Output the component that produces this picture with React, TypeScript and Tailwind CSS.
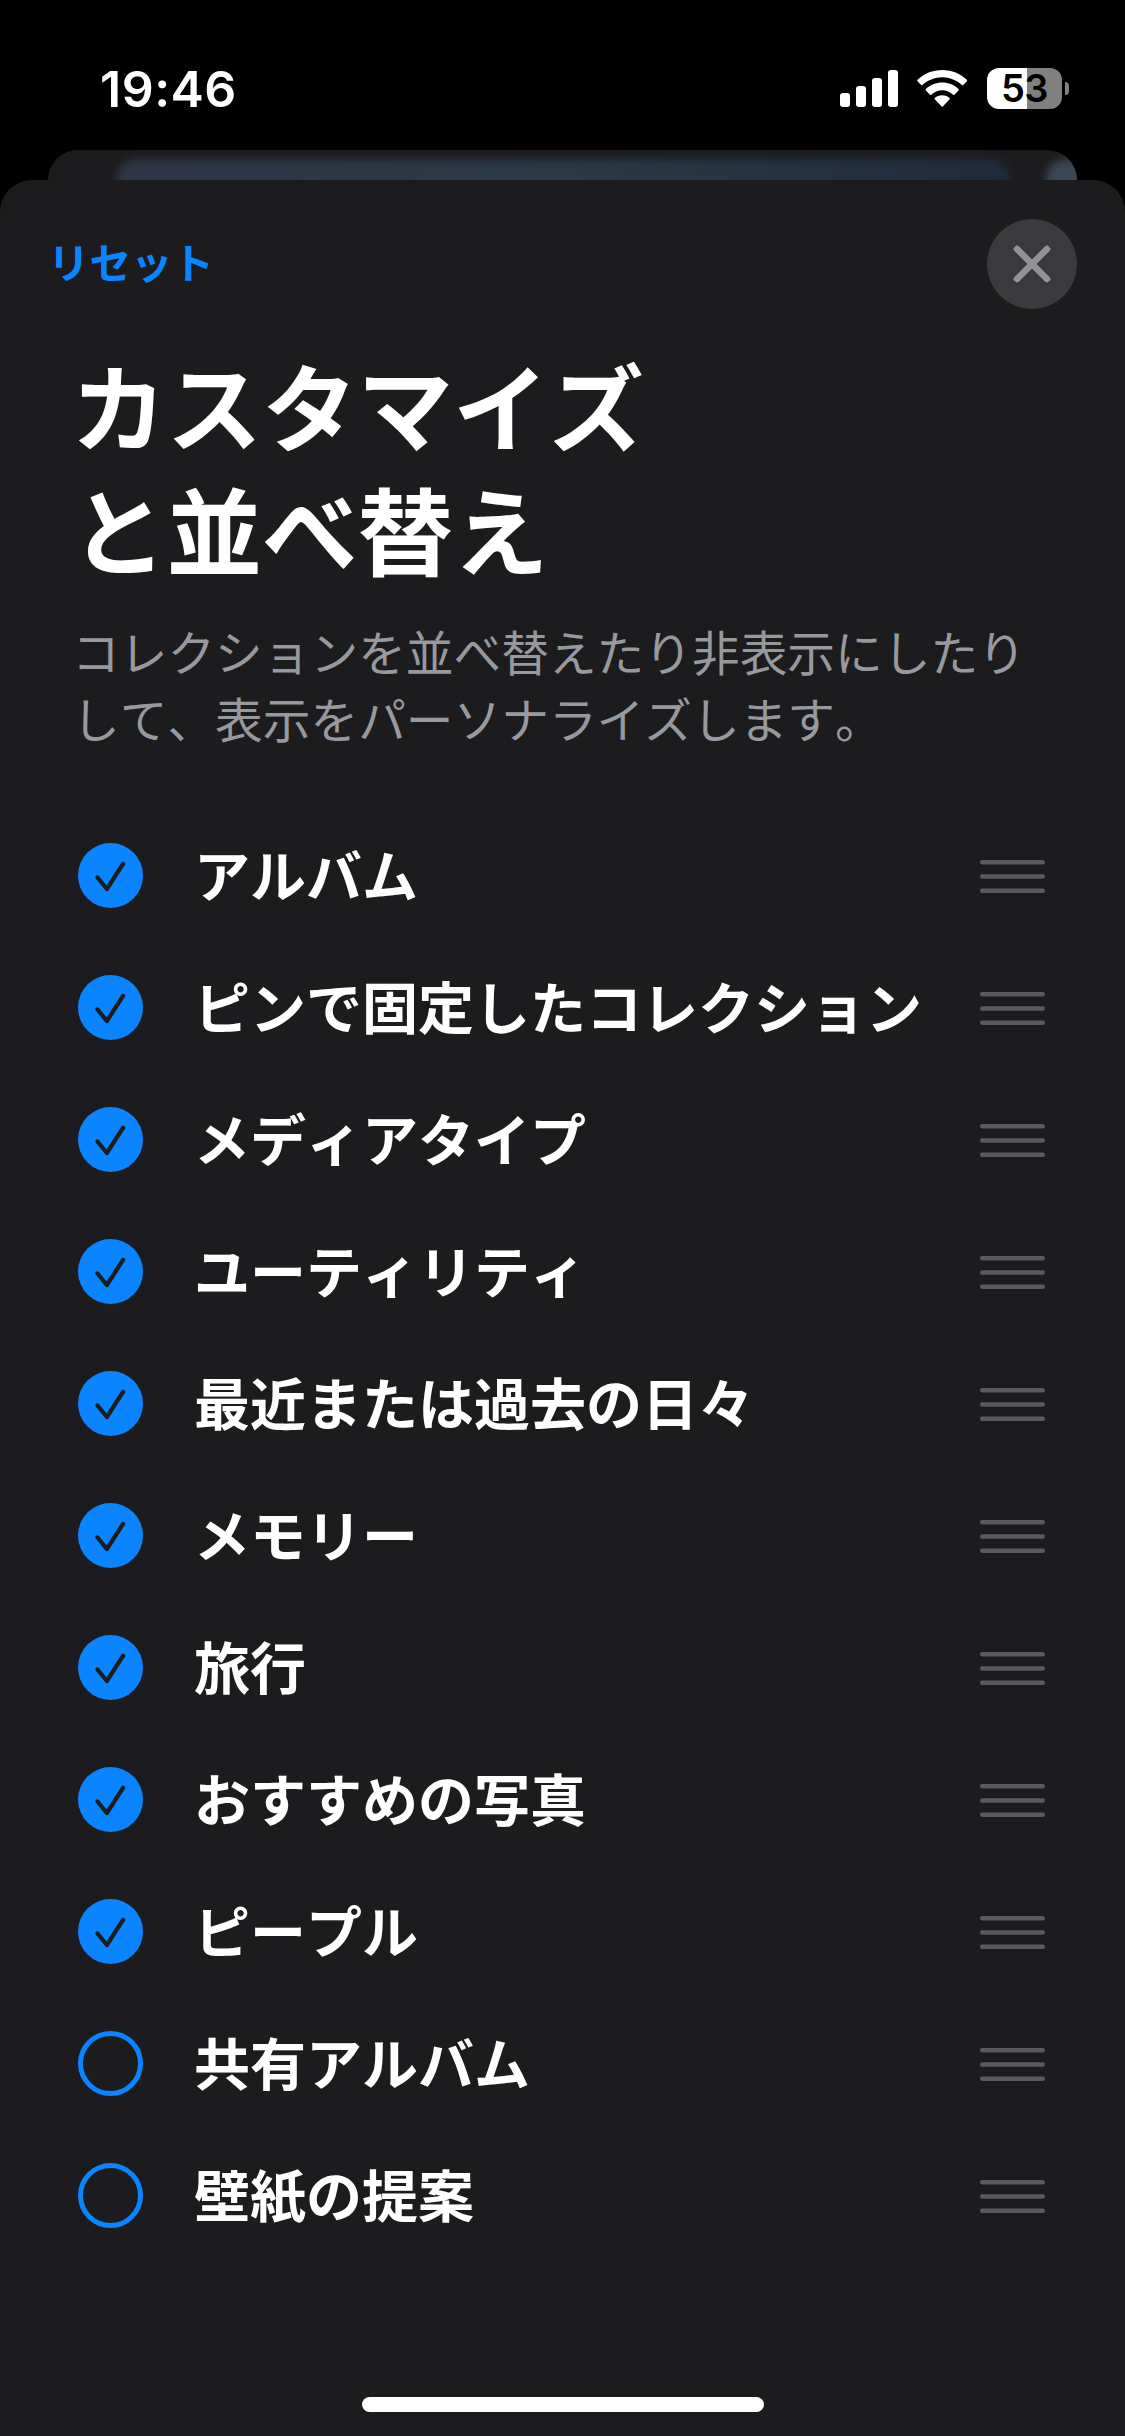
import { useState } from "react";

const initialCollections = [
  { name: "アルバム", visible: true },
  { name: "ピンで固定したコレクション", visible: true },
  { name: "メディアタイプ", visible: true },
  { name: "ユーティリティ", visible: true },
  { name: "最近または過去の日々", visible: true },
  { name: "メモリー", visible: true },
  { name: "旅行", visible: true },
  { name: "おすすめの写真", visible: true },
  { name: "ピープル", visible: true },
  { name: "共有アルバム", visible: false },
  { name: "壁紙の提案", visible: false },
];

function StatusBar() {
  return (
    <div className="flex h-[150px] items-start justify-between pl-[100px] pr-14 pt-[68px] font-['Inter',sans-serif]">
      <div className="text-[50px] font-semibold leading-[42px] tracking-[0.5px] text-white">
        19:46
      </div>
      <div className="flex h-[41px] items-center">
        <svg width="58" height="37" viewBox="0 0 58 37" fill="#fff">
          <rect x="0" y="23" width="10" height="14" rx="3" />
          <rect x="16" y="16" width="10" height="21" rx="3" />
          <rect x="32" y="8" width="10" height="29" rx="3" />
          <rect x="48" y="0" width="10" height="37" rx="3" />
        </svg>
        <svg className="ml-[19px]" width="51" height="37" viewBox="0 0 51 37" fill="#fff">
          <path d="M25.2 0C15.6 0 6.9 3.7 0.5 9.8C0.1 10.2 0.1 10.8 0.5 11.2L4.2 15C4.6 15.4 5.1 15.4 5.5 15C10.6 10.3 17.5 7.2 25.2 7.2C32.9 7.2 39.8 10.3 44.9 15C45.3 15.4 45.8 15.4 46.2 15L49.9 11.2C50.3 10.8 50.3 10.2 49.9 9.8C43.5 3.7 34.8 0 25.2 0Z" />
          <path d="M25.2 12.6C18.9 12.6 13.2 15 8.9 19C8.5 19.4 8.5 20 8.9 20.4L13 24.7C13.4 25.1 13.9 25.1 14.3 24.7C17.2 22 21 20.2 25.2 20.2C29.4 20.2 33.2 22 36.1 24.7C36.5 25.1 37 25.1 37.4 24.7L41.5 20.4C41.9 20 41.9 19.4 41.5 19C37.2 15 31.5 12.6 25.2 12.6Z" />
          <path d="M25.2 25.2C22.3 25.2 19.8 26.2 17.8 27.9C17.4 28.3 17.4 28.8 17.8 29.2L24.6 36.4C25 36.8 25.4 36.8 25.8 36.4L32.6 29.2C33 28.8 33 28.3 32.6 27.9C30.6 26.2 28.1 25.2 25.2 25.2Z" />
        </svg>
        <div className="ml-[19px] flex h-[41px] w-[75px] items-center justify-center rounded-[12px] bg-linear-to-r from-white from-[53.3%] to-[#808080] to-[53.3%]">
          <span className="text-[38px] font-semibold leading-[41px] tracking-[-0.5px] text-black">53</span>
        </div>
        <div className="ml-[3px] h-[13px] w-1 rounded-r-full bg-[#808080]" />
      </div>
    </div>
  );
}

// The page behind the sheet, only its blurred top edge can be seen
function BackCard() {
  return (
    <div className="mx-12 flex h-[60px] justify-between overflow-hidden rounded-t-[30px] bg-[#1c1c1e] pt-[9px]">
      <div className="ml-[68px] h-[80px] w-[894px] rounded-[20px] bg-linear-to-r from-[#2e3546] via-[#2b3947] to-[#1f2b3b] blur-[4px]" />
      <div className="-mr-8 h-[80px] w-[63px] rounded-[20px] bg-[#3c4755] blur-[4px]" />
    </div>
  );
}

function CheckCircle({ checked }: { checked: boolean }) {
  if (!checked) {
    return <span className="block size-[65px] rounded-full border-[5px] border-[#0a84ff]" />;
  }
  return (
    <svg className="block" width="65" height="65" viewBox="0 0 65 65" fill="none">
      <circle cx="32.5" cy="32.5" r="32.5" fill="#0a84ff" />
      <path
        d="M19.5 34.5L28.9 46L45.2 20.7"
        stroke="#1c1c1e"
        strokeWidth="4.2"
        strokeLinecap="round"
        strokeLinejoin="round"
      />
    </svg>
  );
}

function DragHandle() {
  return (
    <svg className="mt-0.5 shrink-0" width="65" height="33" viewBox="0 0 65 33" fill="#5a5a5e">
      <rect x="0" y="0" width="65" height="4.6" rx="2.3" />
      <rect x="0" y="14.2" width="65" height="4.6" rx="2.3" />
      <rect x="0" y="28.4" width="65" height="4.6" rx="2.3" />
    </svg>
  );
}

export default function App() {
  const [collections, setCollections] = useState(initialCollections);

  const toggle = (name: string) => {
    setCollections((items) =>
      items.map((item) => (item.name === name ? { ...item, visible: !item.visible } : item))
    );
  };

  return (
    <div className="flex h-[2436px] w-[1125px] flex-col overflow-hidden bg-black font-['Noto_Sans_CJK_JP',sans-serif] [font-kerning:none]">
      <StatusBar />
      <BackCard />

      <main className="relative -mt-[30px] flex flex-1 flex-col rounded-t-[32px] bg-[#1c1c1e]">
        <header className="flex items-center justify-between pl-12 pr-12 pt-[39px]">
          <button
            onClick={() => setCollections(initialCollections)}
            className="pb-1.5 text-[41.5px] font-bold leading-[60px] text-[#0a84ff]"
          >
            リセット
          </button>
          <button
            aria-label="閉じる"
            className="flex size-[90px] items-center justify-center rounded-full bg-[#3a3a3d]"
          >
            <svg width="38" height="38" viewBox="0 0 38 38" fill="none">
              <path
                d="M4 4L34 34M34 4L4 34"
                stroke="#929297"
                strokeWidth="6.5"
                strokeLinecap="round"
              />
            </svg>
          </button>
        </header>

        <h1 className="mt-[33px] pl-[71px] text-[95.5px] font-bold leading-[124px] text-white">
          カスタマイズ
          <br />
          と並べ替え
        </h1>
        <p className="mt-[27px] whitespace-nowrap pl-[72px] text-[47.7px] leading-[67px] text-[#98989f]">
          コレクションを並べ替えたり非表示にしたり
          <br />
          して、表示をパーソナライズします。
        </p>

        <ul className="mt-[58.5px] pl-[78px] pr-20">
          {collections.map((item) => (
            <li key={item.name} className="flex h-[132px] items-center">
              <button onClick={() => toggle(item.name)} aria-pressed={item.visible}>
                <CheckCircle checked={item.visible} />
              </button>
              <span className="ml-[51px] flex-1 whitespace-nowrap pb-1.5 text-[56px] font-bold leading-[80px] text-white">
                {item.name}
              </span>
              <DragHandle />
            </li>
          ))}
        </ul>

        <div className="mb-6 mt-auto h-[15px] w-[402px] self-center rounded-full bg-white" />
      </main>
    </div>
  );
}
